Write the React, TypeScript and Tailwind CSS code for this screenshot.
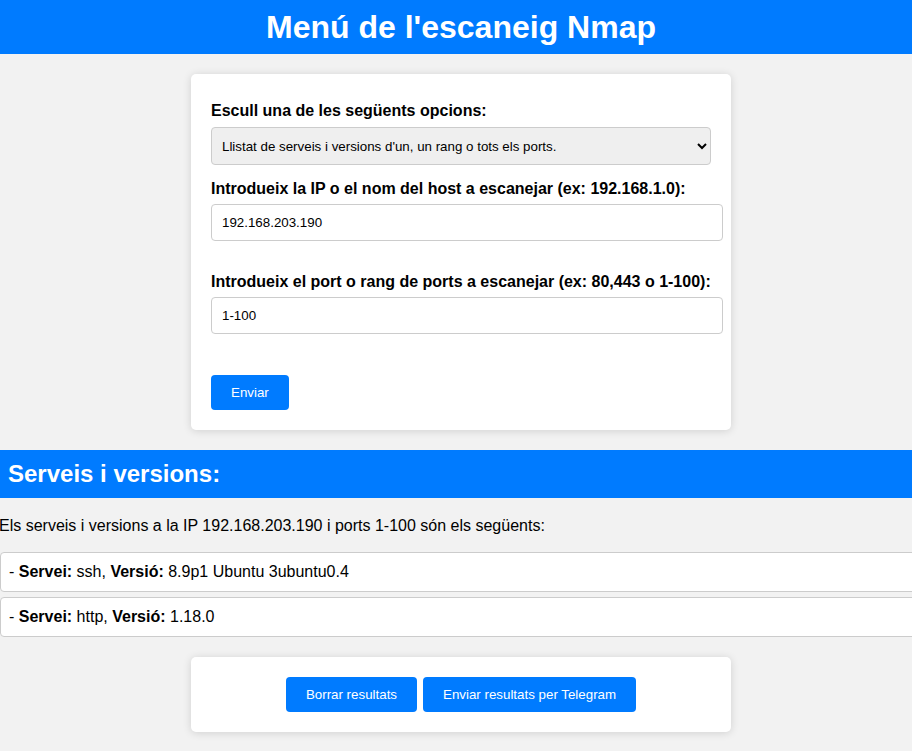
import { useState } from "react";

const services = [
  { name: "ssh", version: "8.9p1 Ubuntu 3ubuntu0.4" },
  { name: "http", version: "1.18.0" },
];

function App() {
  const [ip, setIp] = useState<string>("192.168.203.190");
  const [ports, setPorts] = useState<string>("1-100");

  return (
    <div className="min-h-screen overflow-x-hidden bg-[#f2f2f2] text-black [font-family:'Liberation_Sans',Arial,sans-serif]">
      <div className="w-[922px] pb-5">
        {/* Header */}
        <header className="flex h-[54px] items-center justify-center bg-[#007bff]">
          <h1 className="text-[32px] font-bold leading-none text-white">
            Menú de l'escaneig Nmap
          </h1>
        </header>

        {/* Scan form */}
        <form
          onSubmit={(e) => e.preventDefault()}
          className="mx-auto mt-5 w-[540px] rounded-[5px] bg-white px-5 pt-7 pb-5 shadow-[0_1px_8px_rgba(0,0,0,0.14)]"
        >
          <label className="block text-base font-bold leading-[18px]">
            Escull una de les següents opcions:
          </label>
          <select className="mt-[7px] block h-[38px] w-[500px] rounded-[4px] border border-[#ccc] bg-[#efefef] pl-1.5 pr-2.5 text-[13.33px]">
            <option>Llistat de serveis i versions d'un, un rang o tots els ports.</option>
          </select>

          <label className="mt-[15px] block text-base font-bold leading-[18px]">
            Introdueix la IP o el nom del host a escanejar (ex: 192.168.1.0):
          </label>
          <input
            type="text"
            value={ip}
            onChange={(e) => setIp(e.target.value)}
            className="mt-1.5 block h-[37px] w-[512px] rounded-[4px] border border-[#ccc] bg-white px-2.5 text-[13.33px]"
          />

          <label className="mt-8 block text-base font-bold leading-[18px]">
            Introdueix el port o rang de ports a escanejar (ex: 80,443 o 1-100):
          </label>
          <input
            type="text"
            value={ports}
            onChange={(e) => setPorts(e.target.value)}
            className="mt-1.5 block h-[37px] w-[512px] rounded-[4px] border border-[#ccc] bg-white px-2.5 text-[13.33px]"
          />

          <button
            type="submit"
            className="mt-[41px] block h-[35px] rounded-[4px] bg-[#007bff] px-5 text-[13.33px] text-white"
          >
            Enviar
          </button>
        </form>

        {/* Results */}
        <h2 className="mt-5 flex h-12 items-center bg-[#007bff] px-2 text-2xl font-bold text-white">
          Serveis i versions:
        </h2>
        <p className="mt-[19px] -ml-px text-base leading-[18px]">
          Els serveis i versions a la IP {ip} i ports {ports} són els següents:
        </p>
        <div className="mt-[17px] flex flex-col gap-[5px]">
          {services.map((s) => (
            <div
              key={s.name}
              className="flex h-10 items-center rounded-[4px] border border-[#ccc] bg-white px-2 text-base"
            >
              <span>
                - <b>Servei:</b> {s.name}, <b>Versió:</b> {s.version}
              </span>
            </div>
          ))}
        </div>

        {/* Actions */}
        <div className="mx-auto mt-5 flex w-[540px] justify-center gap-1.5 rounded-[5px] bg-white p-5 shadow-[0_1px_8px_rgba(0,0,0,0.14)]">
          <button className="h-[35px] rounded-[4px] bg-[#007bff] px-5 text-[13.33px] text-white">
            Borrar resultats
          </button>
          <button className="h-[35px] rounded-[4px] bg-[#007bff] px-5 text-[13.33px] text-white">
            Enviar resultats per Telegram
          </button>
        </div>
      </div>
    </div>
  );
}

export default App;
